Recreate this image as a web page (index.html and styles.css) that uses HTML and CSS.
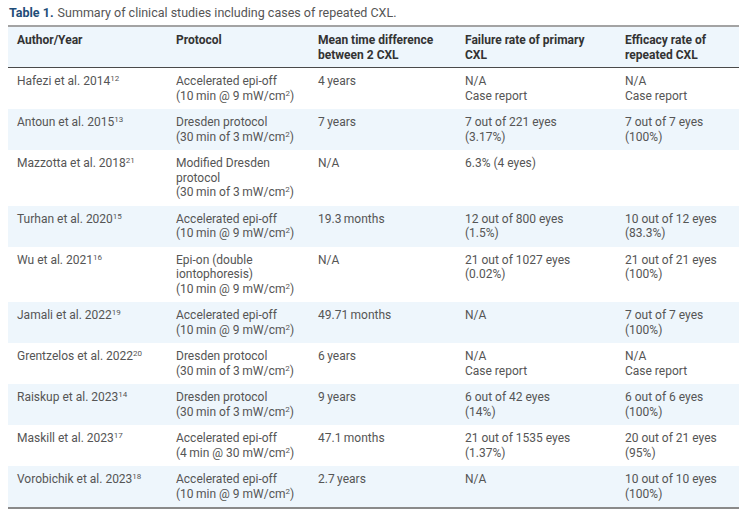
FILE: index.html
```html
<!DOCTYPE html>
<html>
<head>
<meta charset="utf-8">
<link rel="stylesheet" href="styles.css">
</head>
<body>
<div class="caption"><span class="label">Table 1.</span> Summary of clinical studies including cases of repeated CXL.</div>
<table class="data">
  <colgroup>
    <col class="c1"><col class="c2"><col class="c3"><col class="c4"><col class="c5">
  </colgroup>
  <thead>
    <tr>
      <th>Author/Year</th>
      <th>Protocol</th>
      <th>Mean time difference between 2 CXL</th>
      <th>Failure rate of primary CXL</th>
      <th>Efficacy rate of repeated CXL</th>
    </tr>
  </thead>
  <tbody>
    <tr>
      <td>Hafezi et al. 2014<sup>12</sup></td>
      <td>Accelerated epi-off<br>(10&thinsp;min @ 9 mW/cm<sup>2</sup>)</td>
      <td>4&thinsp;years</td>
      <td>N/A<br>Case report</td>
      <td>N/A<br>Case report</td>
    </tr>
    <tr class="alt">
      <td>Antoun et al. 2015<sup>13</sup></td>
      <td>Dresden protocol<br>(30&thinsp;min of 3&thinsp;mW/cm<sup>2</sup>)</td>
      <td>7&thinsp;years</td>
      <td>7 out of 221 eyes<br>(3.17%)</td>
      <td>7 out of 7 eyes<br>(100%)</td>
    </tr>
    <tr>
      <td>Mazzotta et al. 2018<sup>21</sup></td>
      <td>Modified Dresden<br>protocol<br>(30&thinsp;min of 3&thinsp;mW/cm<sup>2</sup>)</td>
      <td>N/A</td>
      <td>6.3% (4 eyes)</td>
      <td></td>
    </tr>
    <tr class="alt">
      <td>Turhan et al. 2020<sup>15</sup></td>
      <td>Accelerated epi-off<br>(10&thinsp;min @ 9 mW/cm<sup>2</sup>)</td>
      <td>19.3&thinsp;months</td>
      <td>12 out of 800 eyes<br>(1.5%)</td>
      <td>10 out of 12 eyes<br>(83.3%)</td>
    </tr>
    <tr>
      <td>Wu et al. 2021<sup>16</sup></td>
      <td>Epi-on (double<br>iontophoresis)<br>(10&thinsp;min @ 9 mW/cm<sup>2</sup>)</td>
      <td>N/A</td>
      <td>21 out of 1027 eyes<br>(0.02%)</td>
      <td>21 out of 21 eyes<br>(100%)</td>
    </tr>
    <tr class="alt">
      <td>Jamali et al. 2022<sup>19</sup></td>
      <td>Accelerated epi-off<br>(10&thinsp;min @ 9 mW/cm<sup>2</sup>)</td>
      <td>49.71&thinsp;months</td>
      <td>N/A</td>
      <td>7 out of 7 eyes<br>(100%)</td>
    </tr>
    <tr>
      <td>Grentzelos et al. 2022<sup>20</sup></td>
      <td>Dresden protocol<br>(30&thinsp;min of 3&thinsp;mW/cm<sup>2</sup>)</td>
      <td>6&thinsp;years</td>
      <td>N/A<br>Case report</td>
      <td>N/A<br>Case report</td>
    </tr>
    <tr class="alt">
      <td>Raiskup et al. 2023<sup>14</sup></td>
      <td>Dresden protocol<br>(30&thinsp;min of 3&thinsp;mW/cm<sup>2</sup>)</td>
      <td>9&thinsp;years</td>
      <td>6 out of 42 eyes<br>(14%)</td>
      <td>6 out of 6 eyes<br>(100%)</td>
    </tr>
    <tr>
      <td>Maskill et al. 2023<sup>17</sup></td>
      <td>Accelerated epi-off<br>(4&thinsp;min @ 30 mW/cm<sup>2</sup>)</td>
      <td>47.1&thinsp;months</td>
      <td>21 out of 1535 eyes<br>(1.37%)</td>
      <td>20 out of 21 eyes<br>(95%)</td>
    </tr>
    <tr class="alt">
      <td>Vorobichik et al. 2023<sup>18</sup></td>
      <td>Accelerated epi-off<br>(10&thinsp;min @ 9 mW/cm<sup>2</sup>)</td>
      <td>2.7&thinsp;years</td>
      <td>N/A</td>
      <td>10 out of 10 eyes<br>(100%)</td>
    </tr>
  </tbody>
</table>
</body>
</html>
```

FILE: styles.css
```css
html, body {
  margin: 0;
  padding: 0;
  background: #ffffff;
}
body {
  padding: 5px 8px 0 8px;
  font-family: Roboto, "Liberation Sans", sans-serif;
  color: #555555;
}
.caption {
  font-size: 12.5px;
  line-height: 15px;
  color: #555555;
  margin-bottom: 5px;
  padding-left: 1px;
}
.caption .label {
  font-weight: bold;
  color: #1e4d78;
  margin-right: 1px;
}
.data {
  width: 731px;
  border-collapse: collapse;
  table-layout: fixed;
  font-size: 12px;
  line-height: 14.5px;
}
.c1 { width: 159px; }
.c2 { width: 142px; }
.c3 { width: 147px; }
.c4 { width: 160px; }
.c5 { width: 123px; }
.data thead tr {
  background: #eef6fc;
  border-top: 2px solid #a3a3a3;
  border-bottom: 1px solid #4a4a4a;
}
.data th {
  text-align: left;
  vertical-align: top;
  font-weight: bold;
  color: #333333;
  padding: 6px 8px 5px 9px;
}
.data td {
  vertical-align: top;
  padding: 6px 8px 6px 9px;
}
.data tbody tr.alt {
  background: #eef6fc;
}
.data tbody tr:last-child {
  border-bottom: 2px solid #8a8a8a;
}
sup {
  font-size: 8px;
  line-height: 0;
  vertical-align: 4px;
}
```
